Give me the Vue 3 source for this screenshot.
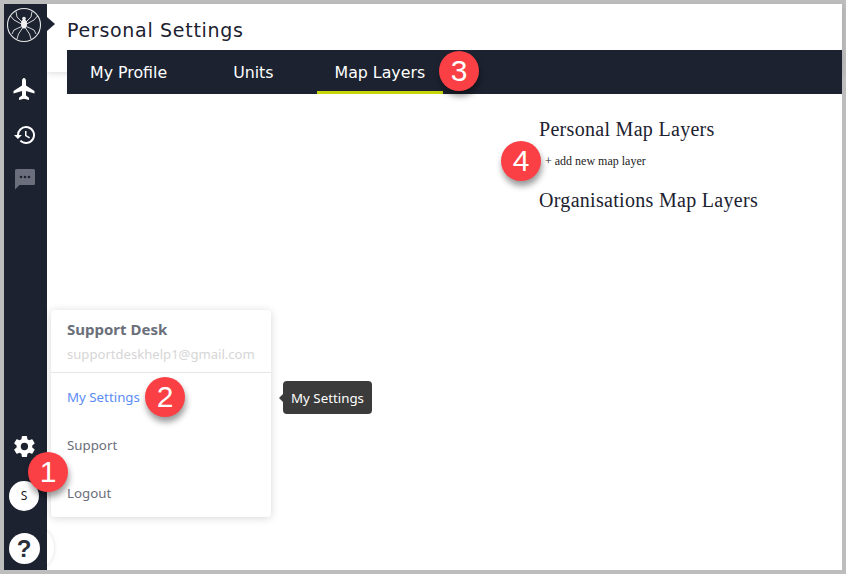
<script setup>
const tabs = [
  { label: 'My Profile', active: false },
  { label: 'Units', active: false },
  { label: 'Map Layers', active: true },
]
const badges = [
  { n: 1, x: 28, y: 452 },
  { n: 2, x: 145, y: 377 },
  { n: 3, x: 439, y: 51 },
  { n: 4, x: 501, y: 141 },
]
function badgeStyle(b) {
  return { left: b.x + 'px', top: b.y + 'px' }
}
</script>

<template>
  <div class="frame">
    <aside class="sidebar">
      <div class="top-icons">
        <svg class="logo" viewBox="0 0 36 36" width="36" height="36" fill="none" stroke="#e8e8e8">
          <circle cx="18" cy="18" r="16.5" stroke-width="1.1" />
          <g stroke-width="0.9">
            <path d="M16 15 L11 10 L10 4.5" />
            <path d="M20 15 L25 10 L26 4.5" />
            <path d="M15.5 17 L8 13 L4.5 9" />
            <path d="M20.5 17 L28 13 L31.5 9" />
            <path d="M15.5 19.5 L8 23 L6 27" />
            <path d="M20.5 19.5 L28 23 L30 27" />
            <path d="M16.5 21 L12.5 27 L11 32" />
            <path d="M19.5 21 L23.5 27 L25 32" />
          </g>
          <ellipse cx="18" cy="17" rx="3" ry="4.6" fill="#f0f0f0" stroke="none" />
          <circle cx="18" cy="11.5" r="1.8" fill="#f0f0f0" stroke="none" />
        </svg>
        <svg class="icon plane" viewBox="0 0 24 24" width="24" height="24" fill="#fff">
          <path d="M12 1c-1.200 0-2 1.400-2 3v4.500L1.500 14v2.500L10 14v4.500L7 20.800V23l5-1.300 5 1.300v-2.200l-3-2.300V14l8.500 2.500V14L14 8.500V4c0-1.600-.8-3-2-3z" />
        </svg>
        <svg class="icon history" viewBox="0 0 24 24" width="24" height="24" fill="#fff">
          <path d="M13 3a9 9 0 0 0-9 9H1l3.900 3.900L8.900 12H6a7 7 0 1 1 2.050 4.950L6.630 18.370A9 9 0 1 0 13 3zm-1 5v5l4.300 2.500.7-1.200-3.500-2.100V8z" />
        </svg>
        <svg class="icon chat" viewBox="0 0 24 24" width="24" height="24" fill="#6b6f7b">
          <path d="M3.500 2h17A1.500 1.500 0 0 1 22 3.500v13a1.500 1.500 0 0 1-1.500 1.500H6.500L2 22.500V3.500A1.500 1.500 0 0 1 3.500 2z" />
          <circle cx="8" cy="10" r="1.300" fill="#1c2230" />
          <circle cx="12" cy="10" r="1.300" fill="#1c2230" />
          <circle cx="16" cy="10" r="1.300" fill="#1c2230" />
        </svg>
      </div>
      <div class="bottom-icons">
        <svg class="icon gear" viewBox="0 0 24 24" width="25" height="25" fill="#fff">
          <path d="M19.400 13c.05-.33.07-.66.07-1s-.02-.67-.07-1l2.100-1.650a.5.5 0 0 0 .12-.64l-2-3.460a.5.5 0 0 0-.61-.22l-2.490 1a7.300 7.300 0 0 0-1.730-1l-.38-2.650A.49.49 0 0 0 13.920 2h-4a.49.49 0 0 0-.49.42l-.38 2.650a7.700 7.700 0 0 0-1.730 1l-2.490-1a.5.5 0 0 0-.61.22l-2 3.460a.49.49 0 0 0 .12.64L4.440 11a7.900 7.900 0 0 0 0 2l-2.100 1.650a.5.5 0 0 0-.12.64l2 3.460c.12.22.39.3.61.22l2.490-1c.52.4 1.100.73 1.730 1l.38 2.650c.03.24.24.42.49.42h4c.25 0 .46-.18.49-.42l.38-2.650a7.700 7.700 0 0 0 1.730-1l2.490 1c.23.08.49 0 .61-.22l2-3.460a.5.5 0 0 0-.12-.64zM11.920 15.500a3.500 3.500 0 1 1 0-7 3.500 3.500 0 0 1 0 7z" />
        </svg>
        <div class="avatar">S</div>
        <div class="help">?</div>
      </div>
    </aside>

    <main class="main">
      <header class="header">
        <h1 class="title">Personal Settings</h1>
        <nav class="tabs">
          <a v-for="t in tabs" :key="t.label" class="tab" :class="{ active: t.active }">{{ t.label }}</a>
        </nav>
      </header>
      <section class="content">
        <h2 class="heading">Personal Map Layers</h2>
        <p class="add">+ add new map layer</p>
        <h2 class="heading second">Organisations Map Layers</h2>
      </section>
    </main>

    <span class="pointer"></span>
    <span class="help-halo"></span>

    <div class="menu">
      <div class="menu-head">
        <div class="menu-name">Support Desk</div>
        <div class="menu-mail">supportdeskhelp1@gmail.com</div>
      </div>
      <ul class="menu-list">
        <li class="menu-item current">My Settings</li>
        <li class="menu-item">Support</li>
        <li class="menu-item">Logout</li>
      </ul>
    </div>

    <div class="tooltip">My Settings</div>

    <div v-for="b in badges" :key="b.n" class="badge" :style="badgeStyle(b)">{{ b.n }}</div>
  </div>
</template>

<style scoped>
.frame {
  position: relative;
  box-sizing: border-box;
  width: 846px;
  height: 574px;
  padding: 4px;
  background: #bdbdbd;
  display: flex;
  overflow: hidden;
  font-family: "Noto Sans", "Open Sans", sans-serif;
}
.sidebar {
  box-sizing: border-box;
  width: 43px;
  flex: none;
  padding-right: 3px;
  background: #1c2230;
  display: flex;
  flex-direction: column;
  justify-content: space-between;
  align-items: center;
  z-index: 2;
}
.top-icons {
  display: flex;
  flex-direction: column;
  align-items: center;
}
.logo {
  margin-top: 3px;
}
.icon {
  display: block;
}
.plane {
  margin-top: 34px;
}
.history {
  margin-top: 22px;
  margin-left: 1px;
}
.chat {
  margin-top: 20px;
  margin-left: 1px;
}
.bottom-icons {
  display: flex;
  flex-direction: column;
  align-items: center;
  padding-bottom: 6px;
}
.gear {
  margin-bottom: 2px;
}
.avatar {
  width: 30px;
  height: 30px;
  margin-top: 20px;
  border-radius: 50%;
  background: #fff;
  color: #222;
  font-size: 12px;
  line-height: 30px;
  text-align: center;
}
.help {
  width: 31px;
  height: 31px;
  margin-top: 22px;
  border-radius: 50%;
  background: #fff;
  color: #2b2f3a;
  font-family: "Liberation Sans", sans-serif;
  font-size: 24px;
  font-weight: 700;
  line-height: 31px;
  text-align: center;
}
.main {
  flex: 1;
  min-width: 0;
  background: #fff;
  display: flex;
  flex-direction: column;
}
.header {
  height: 68px;
  flex: none;
  padding-left: 20px;
  box-shadow: 0 2px 6px rgba(0, 0, 0, 0.12);
  background: #fff;
}
.title {
  margin: 0;
  padding-top: 13px;
  height: 33px;
  font-family: "DejaVu Sans", sans-serif;
  font-size: 19px;
  font-weight: 400;
  line-height: 26px;
  letter-spacing: 0.7px;
  color: #1c2230;
}
.tabs {
  position: relative;
  height: 44px;
  display: flex;
  padding-left: 5px;
  background: #1c2230;
}
.tab {
  box-sizing: border-box;
  padding: 0 18px;
  margin-right: 30px;
  height: 44px;
  line-height: 45px;
  font-family: "DejaVu Sans", sans-serif;
  font-size: 15.8px;
  color: #fff;
}
.tab:nth-child(2) {
  margin-right: 25px;
}
.tab.active {
  border-bottom: 3px solid #c6d60a;
}
.content {
  padding: 46px 0 0 492px;
  font-family: "Liberation Serif", serif;
  color: #1c2230;
}
.heading {
  margin: 0;
  font-size: 20px;
  font-weight: 400;
  line-height: 22px;
  letter-spacing: 0.3px;
}
.add {
  margin: 14px 0 0 6px;
  font-size: 12px;
  line-height: 14px;
  color: #222;
}
.second {
  margin-top: 21px;
}
.pointer {
  position: absolute;
  left: 47px;
  top: 17px;
  width: 0;
  height: 0;
  border-top: 7px solid transparent;
  border-bottom: 7px solid transparent;
  border-left: 8px solid #1c2230;
  z-index: 2;
}
.help-halo {
  position: absolute;
  left: 30px;
  top: 530px;
  width: 24px;
  height: 36px;
  border-radius: 50%;
  background: #fff;
  box-shadow: 0 0 4px rgba(0, 0, 0, 0.14);
  z-index: 1;
}
.menu {
  position: absolute;
  left: 51px;
  top: 310px;
  width: 220px;
  height: 207px;
  background: #fff;
  border-radius: 4px;
  box-shadow: 0 1px 8px rgba(0, 0, 0, 0.16);
  z-index: 3;
}
.menu-head {
  height: 63px;
  box-sizing: border-box;
  padding: 9px 16px 0;
  border-bottom: 1px solid #e6e6e6;
}
.menu-name {
  font-size: 15px;
  font-weight: 700;
  line-height: 20px;
  color: #6a6f7a;
}
.menu-mail {
  margin-top: 6px;
  font-size: 13.1px;
  line-height: 18px;
  color: #d6d6d6;
  white-space: nowrap;
}
.menu-list {
  list-style: none;
  margin: 0;
  padding: 0 16px;
}
.menu-item {
  height: 48px;
  line-height: 48px;
  font-size: 13.3px;
  color: #6a6f7a;
}
.menu-item.current {
  color: #5b8cf5;
}
.tooltip {
  position: absolute;
  left: 283px;
  top: 381px;
  width: 89px;
  height: 33px;
  border-radius: 4px;
  background: #3b3b3b;
  color: #fff;
  font-size: 13.3px;
  line-height: 34px;
  text-align: center;
  z-index: 3;
}
.tooltip::before {
  content: "";
  position: absolute;
  left: -4px;
  top: 13px;
  border-top: 4px solid transparent;
  border-bottom: 4px solid transparent;
  border-right: 4px solid #3b3b3b;
}
.badge {
  position: absolute;
  width: 40px;
  height: 40px;
  border-radius: 50%;
  background: #fa3f45;
  color: #fff;
  font-family: "Liberation Sans", sans-serif;
  font-size: 30px;
  line-height: 40px;
  text-align: center;
  box-shadow: 1px 5px 6px rgba(0, 0, 0, 0.4);
  z-index: 4;
}
</style>
